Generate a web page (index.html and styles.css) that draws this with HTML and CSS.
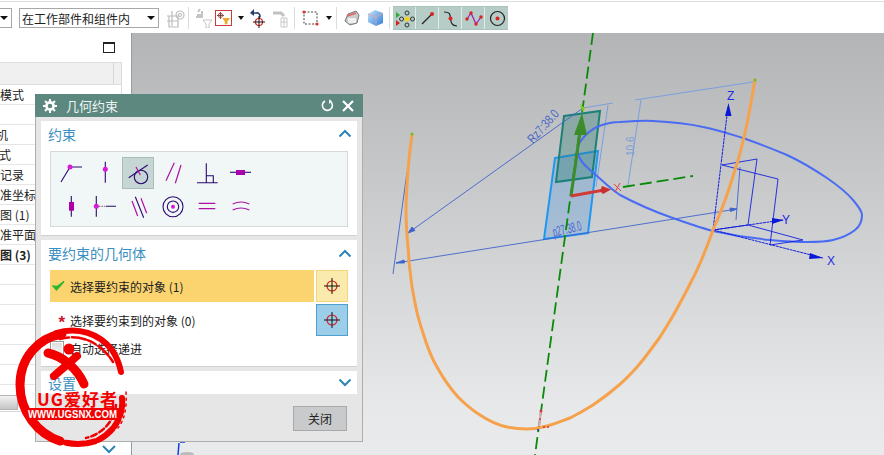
FILE: index.html
```html
<!DOCTYPE html>
<html lang="zh">
<head>
<meta charset="utf-8">
<title>几何约束</title>
<link rel="stylesheet" href="styles.css">
</head>
<body>
<div class="app">
  <header class="toolbar">
    <div class="combo combo-cut"><span class="caret"></span></div>
    <div class="combo combo-main m7"><span>在工作部件和组件内</span><span class="caret"></span></div>
    <svg class="m7" width="19" height="20" viewBox="0 0 19 20"><g fill="none" stroke="#bcbcbc" stroke-width="1.2"><path d="M1 8h11v11H3V8M6 3v15M1 13h11"/><circle cx="14" cy="7" r="4"/><circle cx="14" cy="7" r="1.5"/></g></svg>
    <i class="sep m3"></i>
    <svg class="m6" width="17" height="20" viewBox="0 0 17 20"><path d="M2 7h5V3M5 1 3 4M1 9h7" fill="none" stroke="#c4c4c4" stroke-width="2"/><path d="M8 12h9l-3 4v4h-3v-4z" fill="none" stroke="#c4c4c4"/></svg>
    <span class="redbox m3"><svg width="15" height="14" viewBox="0 0 17 16"><path d="M1 5h8M5 1v8" stroke="#333"/><circle cx="5" cy="5" r="2.5" fill="none" stroke="#c33"/><path d="M7 8h9l-3 4v3h-3v-3z" fill="#eda92b"/></svg></span>
    <span class="caret m6"></span>
    <svg class="m5" width="16" height="20" viewBox="0 0 16 20"><path d="M2 5h5a3 3 0 0 1 3 5" fill="none" stroke="#25406e" stroke-width="1.6"/><path d="M5 1v7L1 5z" fill="#25406e"/><circle cx="10" cy="14" r="3.5" fill="none" stroke="#d22" stroke-width="1.2"/><path d="M4 14h12M10 8v12" stroke="#111"/></svg>
    <svg class="m7" width="16" height="20" viewBox="0 0 16 20"><path d="M1 5h8l3 3" fill="none" stroke="#c2c2c2" stroke-width="3"/><path d="M9 10h6v9H9zM9 14h6M12 10v9" fill="none" stroke="#c8c8c8"/></svg>
    <i class="sep m6"></i>
    <svg class="m7" width="17" height="16" viewBox="0 0 17 16"><rect x="2" y="2" width="13" height="12" fill="none" stroke="#444" stroke-dasharray="2 1.5"/><circle cx="2" cy="2" r="1.6" fill="#d33"/><circle cx="15" cy="14" r="1.6" fill="#d33"/></svg>
    <span class="caret m7"></span>
    <i class="sep m4"></i>
    <svg class="m7" width="16" height="16" viewBox="0 0 16 16"><path d="M1 11 4 4l8-3 3 4-2 8-7 2z" fill="#c9c9cf" stroke="#777"/><path d="M3 6l9-3" stroke="#e2615f" stroke-width="1.4"/><path d="M4 8h8v5H4z" fill="#f1f1f1"/></svg>
    <svg class="m7" width="17" height="18" viewBox="0 0 17 18"><defs><linearGradient id="cube" x1="0" y1="0" x2="1" y2="1"><stop offset="0" stop-color="#c9e6f7"/><stop offset="1" stop-color="#2d7de0"/></linearGradient></defs><path d="M1 5l7-4 8 3v10l-7 3-8-4z" fill="url(#cube)"/><path d="M1 5l8 3 7-4M9 8v9" fill="none" stroke="#e9a0a0" stroke-width=".8"/></svg>
    <i class="sep m5"></i>
    <div class="snap m3">
      <span class="snap-btn"><svg width="23" height="22" viewBox="0 0 23 22"><path d="M3 5l4 3-4 3z" fill="#2fae2f"/><path d="M3 13l4 3-4 3z" fill="#d22"/><g fill="none" stroke="#333"><circle cx="14" cy="6" r="2"/><circle cx="14" cy="18" r="2"/><circle cx="8.500" cy="12" r="2"/><circle cx="19.500" cy="12" r="2"/></g><circle cx="14" cy="12" r="2.500" fill="#f2d21e"/></svg></span>
      <span class="snap-btn"><svg width="23" height="22" viewBox="0 0 23 22"><path d="M6 17 16 7" stroke="#222" stroke-width="1.200"/><circle cx="16" cy="7" r="2" fill="#d22"/></svg></span>
      <span class="snap-btn"><svg width="23" height="22" viewBox="0 0 23 22"><path d="M5 5c6 0 6 2 6.500 6.500S13 19 18 19" fill="none" stroke="#222" stroke-width="1.200"/><circle cx="11.500" cy="11.500" r="2" fill="#d22"/></svg></span>
      <span class="snap-btn"><svg width="23" height="22" viewBox="0 0 23 22"><path d="M5 12 9 6l5 11 5-7" fill="none" stroke="#a018b8" stroke-width="1.200"/><g fill="#d22"><circle cx="5" cy="12" r="1.700"/><circle cx="9" cy="6" r="1.700"/><circle cx="14" cy="17" r="1.700"/><circle cx="19" cy="10" r="1.700"/></g></svg></span>
      <span class="snap-btn"><svg width="23" height="22" viewBox="0 0 23 22"><circle cx="12.500" cy="11.500" r="7" fill="none" stroke="#222" stroke-width="1.200"/><circle cx="12.500" cy="11.500" r="2" fill="#d22"/></svg></span>
    </div>
  </header>

  <div class="workspace">
    <aside class="navigator">
      <div class="nav-top"><span class="maximize"></span></div>
      <div class="nav-table">
        <div class="nav-head"><span class="nav-head-col"></span></div>
        <div class="nav-row">模式</div>
        <div class="nav-row"></div>
        <div class="nav-row"><span class="cut">机</span></div>
        <div class="nav-row"><span class="cut-s">式</span></div>
        <div class="nav-row">记录</div>
        <div class="nav-row">准坐标</div>
        <div class="nav-row">图 (1)</div>
        <div class="nav-row">准平面</div>
        <div class="nav-row nav-bold">图 (3)</div>
        <div class="nav-row"></div>
        <div class="nav-row"></div>
        <div class="nav-row"></div>
        <div class="nav-row"></div>
        <div class="nav-row"></div>
        <div class="nav-row"></div>
        <div class="nav-row"></div>
      </div>
      <div class="nav-btnrow"><span class="nav-btn"></span></div>
      <div class="nav-foot"><svg width="16" height="9" viewBox="0 0 16 9"><path d="M2 1l6 6 6-6" fill="none" stroke="#2d84b5" stroke-width="2"/></svg></div>
    </aside>

    <main class="viewport">
      <svg class="scene" width="752" height="422" viewBox="132 33 752 422">
        <path d="M180 442h5M179 443l-1 12" stroke="#1040e0" stroke-width="1.500"/>
        <ellipse cx="187" cy="454" rx="7" ry="2" fill="#bbb"/>

        <polygon class="plane-blue" points="555,158 598,151 588,233 544,239"/>
        <polygon class="plane-teal" points="564,116 600,111 592,177 556,182"/>

        <g class="dim-light">
          <path d="M583 108 613 103M608 105 596 187M635 100 753 82M641 100 628 185"/>
        </g>
        <g class="dim">
          <path d="M583 108 408 233M396 263 737 209M407 172 393 274M740 167 736 220"/>
          <path d="M408 233l7-2.500-3-3.500zM396 263l8-3 .5 3zM737 209l-7-1 .5 3.500z" fill="#3f63cc"/>
        </g>
        <text class="dim-text" transform="translate(533 144) rotate(-48) scale(1 1.300)">Rz7:38.0</text>
        <text class="dim-text" transform="translate(554 237) rotate(-14) scale(.75 1.400)">p27:38.0</text>
        <text class="dim-text-light" transform="translate(634 156) rotate(-90)">10.6</text>

        <path class="axis" d="M593 33 535 455"/>
        <path class="axis" d="M623 187 693 176"/>

        <path class="blue-curve" d="M620 122C635 121 645 120.500 653 121C675 122 690 124 703 127C718 130 730 134 743 138C760 144 773 149 787 155C802 162 815 170 827 178C840 187 848 194 853 200C859 207 862 211 862 215C862 222 859 227 855 230C849 235 841 238 833 240C825 242 816 242 807 242C794 242 782 241 770 240C750 238 731 235 713 231C698 227 684 222 670 217C653 211 637 204 620 195C610 189 600 178 590 170C584 165 579 159 578 153C577 149 578 145 580 142C585 135 590 130 597 127C604 124 612 122 620 122Z"/>

        <g class="csys">
          <path d="M713 230 728 107M713 230 823 258M713 230 783 220"/>
          <path class="csys-thin" d="M722 165 778 179 770 245M722 165 757 159 748 225 803 240 770 245M713 230 748 225"/>
          <path d="M725 116l3.500-13 3 13zM810 253l13 5-14 1zM772 218l12 2-12 4z" fill="#0a18d8" stroke="none"/>
          <text class="axis-label" x="727" y="100">Z</text>
          <text class="axis-label" x="782" y="224">Y</text>
          <text class="axis-label" x="827" y="265">X</text>
        </g>

        <path class="orange" d="M412 135C410 148 409 160 408 170C407 185 406 198 406 210C406 224 407 236 408 247C409 258 409 265 410 270C411 283 413 294 415 303C417 314 420 324 423 333C427 346 431 357 437 367C443 378 450 388 458 397C465 404 472 410 480 415C489 421 498 425 507 427C514 428.500 520 429 527 429C534 429 540 428 547 426C555 424 562 421 570 418C578 414 585 410 593 405C600 400 606 396 613 390C622 383 630 375 637 367C645 358 652 348 660 337C667 326 674 315 680 303C684 296 688 288 692 280C700 265 707 247 713 230C722 210 729 190 735 170C739 158 742 146 745 133C749 115 752 97 755 80"/>
        <circle cx="412" cy="134" r="1.500" fill="#6fc020"/>
        <circle cx="755" cy="80" r="1.500" fill="#6fc020"/>

        <path d="M571 196 580 132" stroke="#3c8c2c" stroke-width="3"/>
        <path d="M582 113 587 135 574 135z" fill="#3c8c2c"/>
        <path d="M571 196 604 190" stroke="#d23a3a" stroke-width="3"/>
        <path d="M602 186l9 3.500-8 4.500-3-3z" fill="#c93030"/>
        <path d="M614 184 621 191M620 183 615 192" stroke="#e04040"/>
        <path d="M580 104 585 108 583 112 581 108z" fill="#7ccc20"/>

        <path d="M541 411 539 426" stroke="#d8a8ae" stroke-width="2"/>
        <g fill="#cc3a44"><circle cx="541" cy="411" r="1.500"/><circle cx="540" cy="419" r="1"/><circle cx="544" cy="427" r="1"/><circle cx="548" cy="427" r="1"/></g>
        <circle cx="538" cy="430" r="1" fill="#1040e0"/>
      </svg>
    </main>
  </div>

  <section class="dialog">
    <header class="dialog-title">
      <svg width="14" height="14" viewBox="0 0 14 14"><circle cx="7" cy="7" r="3.600" fill="none" stroke="#fff" stroke-width="2.600"/><path d="M7 0v2.500M7 11.500V14M0 7h2.500M11.500 7H14M2 2l2 2M10 10l2 2M12 2l-2 2M4 10l-2 2" stroke="#fff" stroke-width="2"/></svg>
      <span class="dialog-name">几何约束</span>
      <svg width="13" height="13" viewBox="0 0 13 13"><path d="M9.500 2.500A5 5 0 1 1 4 2" fill="none" stroke="#fff" stroke-width="1.600"/><path d="M8 .5v4.500l3-3z" fill="#fff"/></svg>
      <svg class="close-x" width="12" height="12" viewBox="0 0 12 12"><path d="M1 1l10 10M11 1 1 11" stroke="#fff" stroke-width="2.200"/></svg>
    </header>
    <div class="dialog-body">
      <div class="group group-a">
        <div class="group-head"><span>约束</span><svg class="chev" width="14" height="9" viewBox="0 0 14 9"><path d="M1.500 7.500 7 2l5.500 5.500" fill="none" stroke="#2d84b5" stroke-width="2"/></svg></div>
        <div class="constraints">
          <span class="ct"><svg width="34" height="34" viewBox="0 0 34 34"><path class="dk" d="M8 27 17 12H29"/><circle class="mg" cx="17" cy="12" r="2.500"/></svg></span>
          <span class="ct"><svg width="34" height="34" viewBox="0 0 34 34"><path class="dk" d="M18.300 6.700V27.700"/><circle class="mg" cx="18.300" cy="14.300" r="2.500"/></svg></span>
          <span class="ct ct-on"><svg width="32" height="32" viewBox="1 1 32 32"><circle class="dk" cx="20" cy="21" r="6.700"/><path class="dk" d="M7.700 21.700 26.700 9"/><path class="ml" d="M15 11 19.300 19"/></svg></span>
          <span class="ct"><svg width="34" height="34" viewBox="0 0 34 34"><path class="ml" d="M11 25.700 19.300 7.700M20.300 28.300 26 10"/></svg></span>
          <span class="ct"><svg width="34" height="34" viewBox="0 0 34 34"><path class="dk" d="M17.300 8.300V27.700M8 27.700H28.700M17.300 20.700H24.300V27.700"/></svg></span>
          <span class="ct"><svg width="34" height="34" viewBox="0 0 34 34"><path class="dk" d="M7 17.300H28"/><rect class="mr" x="13" y="15" width="9" height="5"/></svg></span>
          <span class="ct"><svg width="34" height="34" viewBox="0 0 34 34"><path class="dk" d="M18.300 7V27.700"/><rect class="mr" x="16" y="13" width="5" height="8.700"/></svg></span>
          <span class="ct"><svg width="34" height="34" viewBox="0 0 34 34"><path class="dk" d="M9.300 7V27.700M19 17.300H29"/><path class="dot" d="M9.300 17.300H19"/><circle class="mg" cx="9.300" cy="17.300" r="2.500"/></svg></span>
          <span class="ct"><svg width="34" height="34" viewBox="0 0 34 34"><path class="ml" d="M11 12 16.700 27M20 9.300 25.700 24.300"/><path class="dk" d="M14.300 7.700 22.700 28.700"/></svg></span>
          <span class="ct"><svg width="34" height="34" viewBox="0 0 34 34"><circle class="dk" cx="18" cy="17.700" r="10"/><circle class="dk" cx="18" cy="17.700" r="5.700"/><circle class="mg" cx="18" cy="17.700" r="2"/></svg></span>
          <span class="ct"><svg width="34" height="34" viewBox="0 0 34 34"><path class="ml" d="M9.700 14.300H26.300M9.700 19.700H26.300"/></svg></span>
          <span class="ct"><svg width="34" height="34" viewBox="0 0 34 34"><path class="ml" d="M9.700 15Q18 11 26.300 15M9.700 21Q18 17 26.300 21"/></svg></span>
        </div>
      </div>

      <div class="group group-b">
        <div class="group-head"><span>要约束的几何体</span><svg class="chev" width="14" height="9" viewBox="0 0 14 9"><path d="M1.500 7.500 7 2l5.500 5.500" fill="none" stroke="#2d84b5" stroke-width="2"/></svg></div>
        <div class="pick-row pick-first">
          <div class="pick-label pick-active"><svg width="13" height="12" viewBox="0 0 13 12"><path d="M1 6l3.500 4L12 1.500 5 6.500z" fill="#2fb52f" stroke="#2fb52f" stroke-width="1.300"/></svg><span>选择要约束的对象 (1)</span></div>
          <span class="pick-btn pick-btn-y"><svg width="16" height="16" viewBox="0 0 16 16"><circle cx="8" cy="8" r="5" fill="none" stroke="#d51818" stroke-width="1.100"/><path d="M0 8H16M8 0V16" stroke="#111"/></svg></span>
        </div>
        <div class="pick-row">
          <div class="pick-label"><span class="star">*</span><span>选择要约束到的对象 (0)</span></div>
          <span class="pick-btn pick-btn-b"><svg width="16" height="16" viewBox="0 0 16 16"><circle cx="8" cy="8" r="5" fill="none" stroke="#d51818" stroke-width="1.100"/><path d="M0 8H16M8 0V16" stroke="#111"/></svg></span>
        </div>
        <div class="check-row"><span class="checkbox"></span><span>自动选择递进</span></div>
      </div>

      <div class="group group-c">
        <div class="group-head"><span>设置</span><svg class="chev" width="14" height="9" viewBox="0 0 14 9"><path d="M1.500 1.500 7 7l5.500-5.500" fill="none" stroke="#2d84b5" stroke-width="2"/></svg></div>
      </div>

      <div class="dialog-foot"><button class="close-btn" type="button">关闭</button></div>
    </div>
  </section>

  <svg class="stamp" width="120" height="130" viewBox="10 322 120 130">
    <g fill="none" stroke="#f20000" stroke-linecap="round">
      <path stroke-width="9" d="M62 334C38 338 20 358 20 385C20 412 38 434 60 441"/>
      <path stroke-width="6" d="M56 333C78 326 100 334 112 350C116 356 119 362 121 372"/>
      <path stroke-width="2.500" stroke-dasharray="9 3 14 2" d="M60 339C82 333 102 344 113 362"/>
      <path stroke-width="6" stroke-dasharray="18 4 8 3" d="M122 398C124 418 112 434 96 441C84 445 70 445 56 440"/>
      <path stroke-width="2.500" stroke-dasharray="6 3" d="M116 405C114 422 102 434 86 438"/>
      <path stroke-width="1.500" stroke-dasharray="2 4" d="M126 392C127 410 124 420 118 428"/>
      <path stroke-width="9" d="M48 353C62 356 77 368 84 384"/>
      <path stroke-width="8" d="M77 356 54 376"/>
    </g>
    <circle cx="69" cy="349" r="5.500" fill="#f20000"/>
    <rect x="27" y="408" width="92" height="12" fill="#f20000"/>
    <text class="stamp-brand" x="37" y="406" textLength="80" lengthAdjust="spacing">UG爱好者</text>
    <text class="stamp-url" x="28" y="418" textLength="89" lengthAdjust="spacingAndGlyphs">WWW.UGSNX.COM</text>
  </svg>
</div>
</body>
</html>
```

FILE: styles.css
```css
* { box-sizing: border-box; }
html, body { margin: 0; height: 100%; }
body { background: #fff; overflow: hidden; font-family: "Noto Sans CJK SC", "Noto Sans", sans-serif; font-size: 12px; color: #222; }

.app { position: relative; width: 884px; height: 455px; display: flex; flex-direction: column; overflow: hidden; }

/* Toolbar */
.toolbar { height: 32px; flex: none; display: flex; align-items: center; background: #fff; border-top: 1px solid #dedede; margin-top: 1px; padding-top: 1px; }
.toolbar > * { flex: none; }
.m3 { margin-left: 3px; }
.m4 { margin-left: 4px; }
.m5 { margin-left: 5px; }
.m6 { margin-left: 6px; }
.m7 { margin-left: 7px; }
.sep { width: 1px; height: 22px; background: #dcdcdc; display: block; }
.caret { width: 0; height: 0; border-left: 3.500px solid transparent; border-right: 3.500px solid transparent; border-top: 4px solid #111; display: inline-block; }
.combo { height: 20px; border: 1px solid #a8a8a8; background: #fff; display: flex; align-items: center; justify-content: space-between; }
.combo-cut { width: 12px; border-left: 0; padding-right: 3px; justify-content: flex-end; }
.combo-main { width: 140px; padding: 0 3px 0 2px; font-size: 12px; color: #222; }
.combo .caret { border-left-width: 4px; border-right-width: 4px; }
.redbox { width: 17px; height: 16px; border: 1px solid #c93b3b; display: flex; align-items: center; justify-content: center; overflow: hidden; }
.redbox svg { flex: none; }
.snap { display: flex; gap: 0; background: #a9c2bd; height: 24px; padding: 1px 0; }
.snap-btn { width: 23px; height: 22px; background: #b5ccc7; border-right: 1px solid #e1ebe9; display: block; }
.snap-btn:last-child { border-right: 0; }

/* Workspace */
.workspace { flex: 1; min-height: 0; display: flex; }
.navigator { width: 132px; flex: none; background: #fff; border-right: 1px solid #9a9b9d; display: flex; flex-direction: column; overflow: hidden; position: relative; }
.nav-top { height: 29px; flex: none; display: flex; justify-content: flex-end; align-items: center; padding: 0 16px 0 0; }
.maximize { width: 12px; height: 11px; border: 1px solid #222; border-top-width: 2px; display: block; }
.nav-table { width: 122px; height: 333px; flex: none; overflow: hidden; border-right: 1px solid #dcdcdc; }
.nav-head { height: 23px; background: #f0f0f0; border-top: 1px solid #dedede; border-bottom: 1px solid #dedede; display: flex; justify-content: flex-end; padding-right: 7px; }
.nav-head-col { width: 1px; background: #d6d6d6; }
.nav-row { height: 20px; border-bottom: 1px solid #e6e6e6; line-height: 19px; font-size: 12px; white-space: nowrap; overflow: hidden; color: #222; }
.nav-bold { font-weight: 700; }
.cut { display: inline-block; margin-left: -4px; }
.cut-s { display: inline-block; margin-left: -1px; }
.nav-btnrow { flex: none; height: 16px; display: flex; }
.nav-btn { width: 18px; height: 15px; background: linear-gradient(#f2f2f2, #c4c4c4); border: 1px solid #b4b4b4; border-left: 0; display: block; }
.nav-foot { flex: 1; display: flex; justify-content: flex-end; align-items: flex-end; padding: 0 14px 1px 0; border-top: 1px solid #d8d8d8; }

.viewport { flex: 1; min-width: 0; background: linear-gradient(#b3b4b6 0%, #d6d7d9 60%, #e7e8ea 88%, #e9eaec 100%); }
.scene { display: block; }
.scene text { font-family: "Liberation Sans", sans-serif; }
.plane-blue { fill: rgba(70, 150, 225, .3); stroke: #1f97f2; stroke-width: 2; }
.plane-teal { fill: rgba(40, 125, 115, .35); stroke: #1a8078; stroke-width: 2; }
.dim-light path { fill: none; stroke: #78a0e0; stroke-width: 1; }
.dim path { stroke: #3f63cc; stroke-width: .9; fill: none; }
.dim path:nth-child(2) { fill: #3f63cc; }
.dim-text { font-size: 10px; fill: #4a68c8; }
.dim-text-light { font-size: 10px; fill: #7c9fdc; }
.axis { fill: none; stroke: #0a8a0a; stroke-width: 1.800; stroke-dasharray: 12 5; }
.blue-curve { fill: none; stroke: #4a6cf2; stroke-width: 2; }
.orange { fill: none; stroke: #f6a24c; stroke-width: 3; stroke-linecap: round; }
.csys path { stroke: #1220dc; stroke-width: 1; fill: none; stroke-dasharray: 3 .6; }
.csys .csys-thin { stroke-width: .9; stroke-dasharray: none; }
.csys path:nth-child(3) { fill: #0a18d8; stroke: none; }
.axis-label { font-size: 12px; fill: #1c2ce0; }

/* Dialog */
.dialog { position: absolute; left: 35px; top: 94px; width: 328px; height: 348px; background: #e6e6e6; border: 1px solid #adadad; border-top: 0; display: flex; flex-direction: column; }
.dialog-title { height: 23px; flex: none; background: #5c8880; color: #fff; display: flex; align-items: center; padding: 0 9px 0 8px; margin: 0 -1px; }
.dialog-name { flex: 1; font-size: 13px; margin-left: 9px; color: #eef4f3; }
.close-x { margin-left: 8px; }
.dialog-body { flex: 1; display: flex; flex-direction: column; padding: 4px 5px 0; gap: 4px; }
.group { background: #fff; border-bottom: 1px solid #d0d0d0; flex: none; }
.group-a { height: 115px; }
.group-b { height: 127px; }
.group-c { height: 23px; border-bottom: 0; }
.group-head { height: 26px; display: flex; align-items: center; justify-content: space-between; padding: 0 5px 0 7px; font-size: 14px; color: #3a8fc0; }
.group-a .group-head { height: 25px; }
.group-c .group-head { height: 23px; }
.constraints { margin: 5px 9px 0; width: 298px; height: 76px; background: #f1f6f6; border: 1px solid #d5d9d9; padding: 3px 2px; display: grid; grid-template-columns: repeat(6, 34px); grid-auto-rows: 34px; }
.ct { display: block; width: 34px; height: 34px; }
.ct svg { display: block; }
.ct-on { width: 32px; height: 32px; margin: 2px 0 0 1px; background: #c6d6d4; border: 1px solid #a8bcb9; }
.ct-on svg { margin: -1px; }
.dk { fill: none; stroke: #2a0a70; stroke-width: 1.100; }
.ml { fill: none; stroke: #b010a8; stroke-width: 1.200; }
.mg { fill: #d81ad8; }
.mr { fill: #ac00ac; }
.dot { fill: none; stroke: #666; stroke-dasharray: 1.500 1; }
.pick-row { height: 32px; margin: 0 9px 2px; display: flex; gap: 2px; }
.pick-first { margin-top: 4px; }
.pick-label { flex: 1; display: flex; align-items: center; gap: 5px; padding-left: 2px; font-size: 12px; }
.pick-active { background: #fbd470; }
.star { color: #d0142a; font-family: "Liberation Sans", sans-serif; font-weight: 700; font-size: 17px; line-height: 1; width: 13px; text-align: right; padding-top: 5px; }
.pick-btn { width: 32px; height: 32px; flex: none; display: flex; align-items: center; justify-content: center; border: 1px solid; }
.pick-btn-y { background: #faeaab; border-color: #f5d67f; }
.pick-btn-b { background: #9dcee9; border-color: #4da0d0; }
.check-row { display: flex; align-items: center; gap: 6px; margin: 4px 9px 0; height: 16px; font-size: 12px; }
.checkbox { width: 14px; height: 14px; border: 1px solid #999; background: linear-gradient(#dcdcdc, #f5f5f5); box-shadow: inset 0 0 0 1px #fff; }
.dialog-foot { display: flex; justify-content: flex-end; padding: 8px 10px 0 0; }
.close-btn { width: 54px; height: 25px; background: #c9cacc; border: 1px solid #a9a9a9; font: 12px "Noto Sans CJK SC", sans-serif; color: #222; padding: 0; }

/* Watermark stamp */
.stamp { position: absolute; left: 10px; top: 322px; }
.stamp text { font-weight: 700; }
.stamp-brand { font-family: "Noto Sans CJK SC", sans-serif; font-size: 17px; fill: #f20000; }
.stamp-url { font-family: "Liberation Sans", sans-serif; font-size: 10.500px; fill: #fff; }
```
